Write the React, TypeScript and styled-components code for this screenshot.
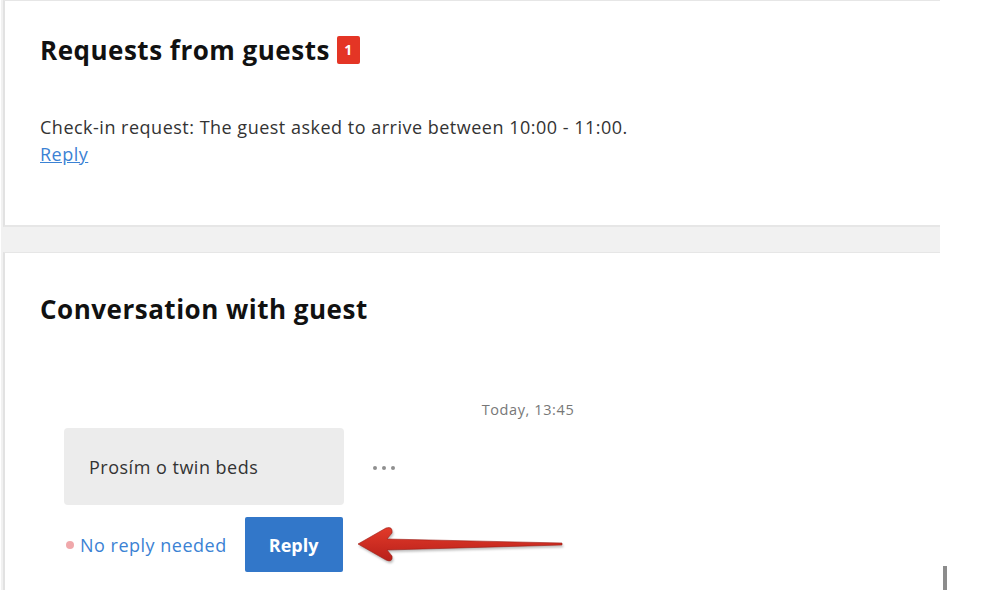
import React from 'react';
import styled, { createGlobalStyle } from 'styled-components';

const GlobalStyle = createGlobalStyle`
  html, body {
    margin: 0;
    padding: 0;
    background: #ffffff;
  }
  body {
    font-family: "Open Sans", "Noto Sans", sans-serif;
    color: #333;
  }
`;

function App() {
  return (
    <>
      <GlobalStyle />
      <Page>
        <Column>
          <Card $height={227} $top={33}>
            <Title>
              Requests from guests <Badge>1</Badge>
            </Title>
            <RequestText>
              Check-in request: The guest asked to arrive between 10:00 - 11:00.
            </RequestText>
            <TextLink href="#">Reply</TextLink>
          </Card>
          <Card $height={338} $top={40} $gap>
            <Title>Conversation with guest</Title>
            <Chat>
              <Stamp>Today, 13:45</Stamp>
              <MessageRow>
                <Bubble>Prosím o twin beds</Bubble>
                <More>
                  <MoreDot />
                  <MoreDot />
                  <MoreDot />
                </More>
              </MessageRow>
              <ActionRow>
                <Dot />
                <NoReply href="#">No reply needed</NoReply>
                <ReplyButton>Reply</ReplyButton>
              </ActionRow>
            </Chat>
          </Card>
        </Column>
        <Arrow width="212" height="40" viewBox="0 0 212 40">
          <defs>
            <linearGradient id="ar" x1="0" y1="0" x2="0" y2="1">
              <stop offset="0" stopColor="#e23a2a" />
              <stop offset="1" stopColor="#b8201a" />
            </linearGradient>
          </defs>
          <path
            d="M2 19 L30 3 Q37 1 36 8 L31 14 L206 18 L206 20 L31 25 L36 31 Q37 38 30 35 Z"
            fill="url(#ar)"
            stroke="#9a1c16"
            strokeWidth="0.6"
            strokeLinejoin="round"
          />
        </Arrow>
        <ScrollMark />
      </Page>
    </>
  );
}

export default App;

const Page = styled.div`
  position: relative;
  width: 984px;
  height: 590px;
  overflow: hidden;
  background: #ffffff;
`;

const Column = styled.div`
  display: flex;
  flex-direction: column;
  width: 939px;
  margin-left: 1px;
  background: #f1f1f1;
`;

const Card = styled.section<{ $height: number; $top: number; $gap?: boolean }>`
  box-sizing: border-box;
  height: ${(p) => p.$height}px;
  margin-left: 2px;
  margin-top: ${(p) => (p.$gap ? '25px' : '0')};
  background: #ffffff;
  border-left: 2px solid #e2e2e2;
  border-top: 1px solid #e6e6e6;
  border-bottom: ${(p) => (p.$gap ? 'none' : '2px solid #e6e6e6')};
  padding: ${(p) => p.$top}px 0 0 35px;
`;

const Title = styled.h2`
  display: flex;
  align-items: center;
  gap: 7px;
  margin: 0;
  font-size: 26px;
  font-weight: 700;
  letter-spacing: 0.5px;
  color: #111;
  line-height: 32px;
`;

const Badge = styled.span`
  display: inline-flex;
  align-items: center;
  justify-content: center;
  width: 23px;
  height: 28px;
  border-radius: 2px;
  background: #e43525;
  color: #fff;
  font-size: 14px;
  font-weight: 700;
  letter-spacing: 0;
`;

const RequestText = styled.p`
  margin: 48px 0 0;
  font-size: 18px;
  letter-spacing: 0.5px;
  line-height: 27px;
  color: #333;
`;

const TextLink = styled.a`
  font-size: 18px;
  letter-spacing: 0.5px;
  line-height: 27px;
  color: #3b82d4;
  text-decoration: underline;
`;

const Chat = styled.div`
  width: 928px;
  margin: 76px 0 0 24px;
`;

const Stamp = styled.div`
  text-align: center;
  font-size: 14.5px;
  letter-spacing: 0.6px;
  color: #777;
  line-height: 18px;
`;

const MessageRow = styled.div`
  display: flex;
  align-items: center;
  gap: 29px;
  margin-top: 9px;
`;

const Bubble = styled.div`
  box-sizing: border-box;
  width: 280px;
  height: 77px;
  display: flex;
  align-items: center;
  padding-left: 25px;
  border-radius: 4px;
  background: #ececec;
  font-size: 18px;
  letter-spacing: 0.5px;
  color: #333;
`;

const More = styled.span`
  display: flex;
  gap: 5px;
  padding-top: 3px;
`;

const MoreDot = styled.span`
  width: 4px;
  height: 4px;
  border-radius: 50%;
  background: #8f8f8f;
`;

const ActionRow = styled.div`
  display: flex;
  align-items: center;
  margin-top: 12px;
  padding-left: 2px;
`;

const Dot = styled.span`
  width: 8px;
  height: 8px;
  border-radius: 50%;
  background: #f0a8ab;
  margin-right: 6px;
`;

const NoReply = styled.a`
  font-size: 18px;
  letter-spacing: 0.5px;
  color: #3b82d4;
  text-decoration: none;
  margin-right: 18px;
`;

const ReplyButton = styled.button`
  width: 98px;
  height: 55px;
  border: none;
  border-radius: 2px;
  background: #3277c9;
  color: #fff;
  font-family: inherit;
  font-size: 18px;
  font-weight: 700;
  cursor: pointer;
`;

const Arrow = styled.svg`
  position: absolute;
  left: 356px;
  top: 525px;
  filter: drop-shadow(1px 2px 1px rgba(0, 0, 0, 0.25));
`;

const ScrollMark = styled.div`
  position: absolute;
  left: 943px;
  top: 566px;
  width: 4px;
  height: 24px;
  background: #8c8c8c;
`;
